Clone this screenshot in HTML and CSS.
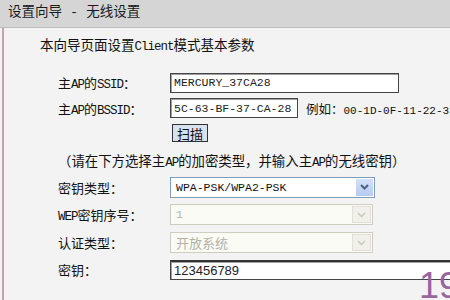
FILE: index.html
```html
<!DOCTYPE html>
<html lang="zh">
<head>
    <meta charset="UTF-8">
    <title>设置向导 - 无线设置</title>
    <link rel="stylesheet" href="styles.css">
</head>
<body>
    <div class="title">设置向导 - 无线设置</div>
    <div class="panel">
        <p class="intro">本向导页面设置<span class="en">Client</span>模式基本参数</p>
        <div class="form">
            <label>主<span class="en">AP</span>的<span class="en">SSID</span>：</label>
            <div><input type="text" class="field ssid" value="MERCURY_37CA28"></div>

            <label>主<span class="en">AP</span>的<span class="en">BSSID</span>：</label>
            <div class="inline">
                <input type="text" class="field bssid" value="5C-63-BF-37-CA-28">
                <span class="hint">例如：<span class="mac">00-1D-0F-11-22-33</span></span>
            </div>

            <span></span>
            <div><button class="scan">扫描</button></div>

            <p class="note">（请在下方选择主<span class="en">AP</span>的加密类型，并输入主<span class="en">AP</span>的无线密钥）</p>

            <label>密钥类型：</label>
            <div class="select">
                <span class="value">WPA-PSK/WPA2-PSK</span>
                <span class="arrow"><svg width="9" height="6" viewBox="0 0 9 6"><path d="M1 1 L4.5 4.5 L8 1" fill="none" stroke="currentColor" stroke-width="2"/></svg></span>
            </div>

            <label><span class="en">WEP</span>密钥序号：</label>
            <div class="select disabled">
                <span class="value">1</span>
                <span class="arrow"><svg width="9" height="6" viewBox="0 0 9 6"><path d="M1 1 L4.5 4.5 L8 1" fill="none" stroke="currentColor" stroke-width="1.5"/></svg></span>
            </div>

            <label>认证类型：</label>
            <div class="select disabled">
                <span class="value cn">开放系统</span>
                <span class="arrow"><svg width="9" height="6" viewBox="0 0 9 6"><path d="M1 1 L4.5 4.5 L8 1" fill="none" stroke="currentColor" stroke-width="1.5"/></svg></span>
            </div>

            <label>密钥：</label>
            <div><input type="text" class="field key" value="123456789"></div>
        </div>
    </div>
    <div class="mark">19</div>
</body>
</html>
```

FILE: styles.css
```css
body {
    margin: 0;
    background: #f3f3f3;
    font-family: "Liberation Mono", "Noto Sans CJK SC", monospace;
    font-size: 13px;
    color: #111;
    overflow: hidden;
    height: 300px;
    position: relative;
}
.title {
    height: 27px;
    line-height: 26px;
    padding-left: 8px;
    background: #d5d5d5;
    border-bottom: 1px solid #bcbcbc;
    font-size: 13.5px;
    color: #1a1a1a;
}
.panel {
    margin-left: 2px;
    border-left: 2px solid #c7a3a3;
    height: 272px;
    background: #f3f3f3;
}
.en {
    font-size: 12.5px;
    letter-spacing: -1px;
}
.intro {
    margin: 0;
    padding: 9px 0 0 36px;
    line-height: 20px;
    font-size: 13.5px;
}
.form {
    display: grid;
    grid-template-columns: 112px 300px;
    grid-template-rows: 25px 26px 25px 28px 26px 29px 27px 27px;
    align-items: center;
    margin-top: 13px;
    padding-left: 54px;
}
label {
    font-size: 13px;
}
.inline {
    display: flex;
    align-items: center;
    gap: 8px;
}
.field {
    box-sizing: border-box;
    height: 20px;
    padding: 0 3px;
    margin: 0;
    border: 1px solid #444;
    box-shadow: inset 1px 1px 0 #a0a0a0;
    background: #fff;
    font-family: "Liberation Mono", monospace;
    font-size: 11.5px;
    color: #222;
}
.ssid {
    width: 229px;
}
.bssid {
    width: 128px;
}
.hint {
    font-size: 12.5px;
    white-space: nowrap;
}
.mac {
    font-size: 11px;
}
.key {
    width: 300px;
    border-top: 2px solid #333;
    border-right: none;
    font-family: "Liberation Sans", sans-serif;
    font-size: 13px;
}
.scan {
    width: 36px;
    height: 18px;
    margin-left: 2px;
    padding: 0;
    border: 1px solid #333;
    background: #d8e2ee;
    font-family: "Noto Sans CJK SC", sans-serif;
    font-size: 13px;
    line-height: 15px;
    color: #111;
}
.note {
    grid-column: 1 / 3;
    margin: 0;
    font-size: 13.4px;
    white-space: nowrap;
}
.select {
    box-sizing: border-box;
    width: 205px;
    height: 21px;
    display: flex;
    align-items: stretch;
    border: 1px solid #7f9db9;
    background: #fff;
}
.select .value {
    flex: 1;
    padding-left: 5px;
    line-height: 19px;
    font-family: "Liberation Mono", monospace;
    font-size: 11.5px;
}
.select .arrow {
    width: 17px;
    margin: 1px;
    display: flex;
    align-items: center;
    justify-content: center;
    background: linear-gradient(#d3e0f8, #b6cbf2);
    color: #4d6185;
}
.select.disabled {
    width: 203px;
    border-color: #cfcdbf;
    background: #fbfbf6;
}
.select.disabled .value {
    color: #b4b2a6;
}
.select.disabled .value.cn {
    font-family: "Noto Sans CJK SC", sans-serif;
    font-size: 13px;
}
.select.disabled .arrow {
    background: #f1f0ea;
    border: 1px solid #e2e0d6;
    color: #c9c7bb;
}
.mark {
    position: absolute;
    left: 419px;
    top: 265px;
    font-family: "Liberation Sans", sans-serif;
    font-size: 36px;
    color: #96679c;
}
```
